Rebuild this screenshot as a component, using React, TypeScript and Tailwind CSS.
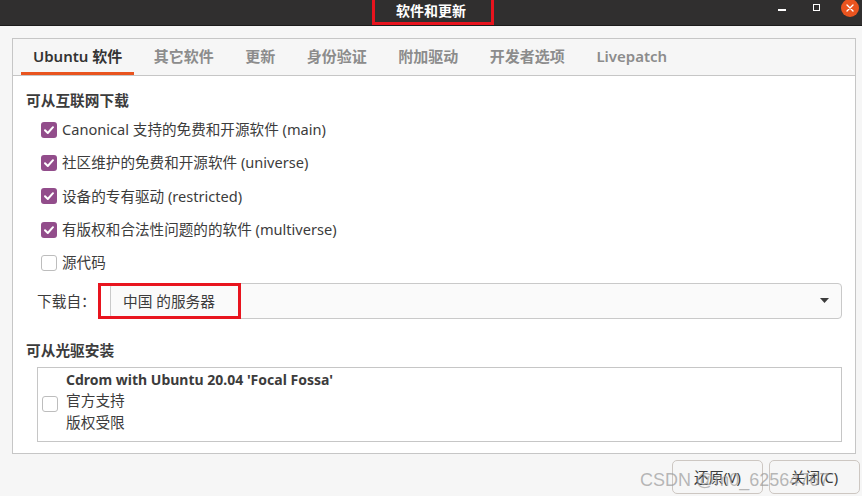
import { useState } from "react";

const font = "font-['Noto_Sans','Noto_Sans_CJK_SC',sans-serif]";

const tabs = ["Ubuntu 软件", "其它软件", "更新", "身份验证", "附加驱动", "开发者选项", "Livepatch"];

const sources = [
  { label: "Canonical 支持的免费和开源软件 (main)", checked: true },
  { label: "社区维护的免费和开源软件 (universe)", checked: true },
  { label: "设备的专有驱动 (restricted)", checked: true },
  { label: "有版权和合法性问题的的软件 (multiverse)", checked: true },
  { label: "源代码", checked: false },
];

function CheckBox({ checked, onClick }: { checked: boolean; onClick?: () => void }) {
  if (checked) {
    return (
      <button onClick={onClick} className="w-[16px] h-[16px] rounded-[3px] bg-[#924d8b] flex items-center justify-center shrink-0">
        <svg width="12" height="12" viewBox="0 0 12 12">
          <polyline points="2,6.2 4.8,9 10,3.2" fill="none" stroke="white" strokeWidth="2" strokeLinecap="round" strokeLinejoin="round" />
        </svg>
      </button>
    );
  }
  return <button onClick={onClick} className="w-[16px] h-[16px] rounded-[3px] bg-white border border-[#bdbdbd] shrink-0" />;
}

export default function App() {
  const [checks, setChecks] = useState(sources.map((s) => s.checked));
  const [cdrom, setCdrom] = useState(false);

  return (
    <div className={`w-[862px] h-[496px] bg-[#f6f6f6] flex flex-col overflow-hidden text-[#3c3c3c] ${font}`}>
      {/* title bar */}
      <div className="relative h-[26px] bg-[#302f2f] border-b border-[#1c1c1c] flex items-center justify-center shrink-0">
        <span className="text-white text-[14px] font-bold -mt-[4px]">软件和更新</span>
        <div className="absolute left-[372px] top-[-3px] w-[122px] h-[28px] border-[3px] border-[#e8141e]" />
        <div className="absolute left-[778px] top-[9px] w-[8px] h-[1.5px] bg-white" />
        <div className="absolute left-[813px] top-[4px] w-[7px] h-[7px] border border-white" />
        <div className="absolute left-[841px] top-[-1px] w-[18px] h-[18px] rounded-full bg-[#e9541f] flex items-center justify-center">
          <svg width="8" height="8" viewBox="0 0 8 8">
            <path d="M1 1 L7 7 M7 1 L1 7" stroke="white" strokeWidth="1.4" strokeLinecap="round" />
          </svg>
        </div>
      </div>

      {/* notebook */}
      <div className="ml-[12px] mt-[12px] w-[844px] h-[416px] border border-[#c6c6c6] flex flex-col shrink-0">
        <div className="h-[37px] border-b border-[#c6c6c6] flex items-stretch pl-[8px] gap-[7.5px] bg-[#f6f6f6]">
          {tabs.map((t, i) => (
            <div
              key={t}
              className={`px-[12px] flex items-center text-[15px] font-semibold border-b-[3px] pt-[2px] ${
                i === 0 ? "border-[#e9541f] text-[#333]" : "border-transparent text-[#8c8c8c]"
              }`}
            >
              {t}
            </div>
          ))}
        </div>

        <div className="flex-1 bg-white px-[13px] pt-[14px] flex flex-col">
          <div className="text-[14.7px] font-bold leading-[20px]">可从互联网下载</div>
          <div className="mt-[3px] pl-[15px] flex flex-col">
            {sources.map((s, i) => (
              <div key={s.label} className="h-[33.4px] flex items-center gap-[5px] text-[14.6px]">
                <CheckBox
                  checked={checks[i]}
                  onClick={() => setChecks(checks.map((c, j) => (j === i ? !c : c)))}
                />
                <span>{s.label}</span>
              </div>
            ))}
          </div>

          <div className="relative mt-[3px] flex items-center pl-[11px]">
            <span className="text-[14.7px] w-[73px]">下载自：</span>
            <div className="flex-1 h-[36px] border border-[#c9c9c9] rounded-[4px] bg-[#fafafa] flex items-center justify-between pl-[12px] pr-[12px] text-[14.7px]">
              <span>中国 的服务器</span>
              <svg width="9" height="5" viewBox="0 0 9 5">
                <path d="M0 0 L9 0 L4.5 5 Z" fill="#3c3c3c" />
              </svg>
            </div>
            <div className="absolute left-[72px] top-0 w-[143px] h-[36px] border-[3px] border-[#e8141e]" />
          </div>

          <div className="mt-[21px] text-[14.7px] font-bold leading-[20px]">可从光驱安装</div>
          <div className="mt-[7px] ml-[11px] h-[75px] border border-[#c6c6c6] flex items-center pl-[4px] gap-[8px]">
            <CheckBox checked={cdrom} onClick={() => setCdrom(!cdrom)} />
            <div className="flex flex-col text-[14.7px] leading-[21.5px] -mt-[7px]">
              <span className="font-bold text-[14px]">Cdrom with Ubuntu 20.04 'Focal Fossa'</span>
              <span>官方支持</span>
              <span>版权受限</span>
            </div>
          </div>
        </div>
      </div>

      {/* buttons */}
      <div className="relative flex justify-end gap-[6px] pr-[2px] mt-[6px]">
        <button className="w-[91px] h-[34px] rounded-[5px] border border-[#cdc7c2] bg-[#f6f6f6] text-[14.7px]">还原(V)</button>
        <button className="w-[91px] h-[34px] rounded-[5px] border border-[#cdc7c2] bg-[#f6f6f6] text-[14.7px]">关闭(C)</button>
        <span className="absolute left-[640px] top-[7px] text-[18px] text-[#9a9a9a]/70 font-['Liberation_Sans',sans-serif] pointer-events-none">
          CSDN @m0_62564767
        </span>
      </div>
    </div>
  );
}
